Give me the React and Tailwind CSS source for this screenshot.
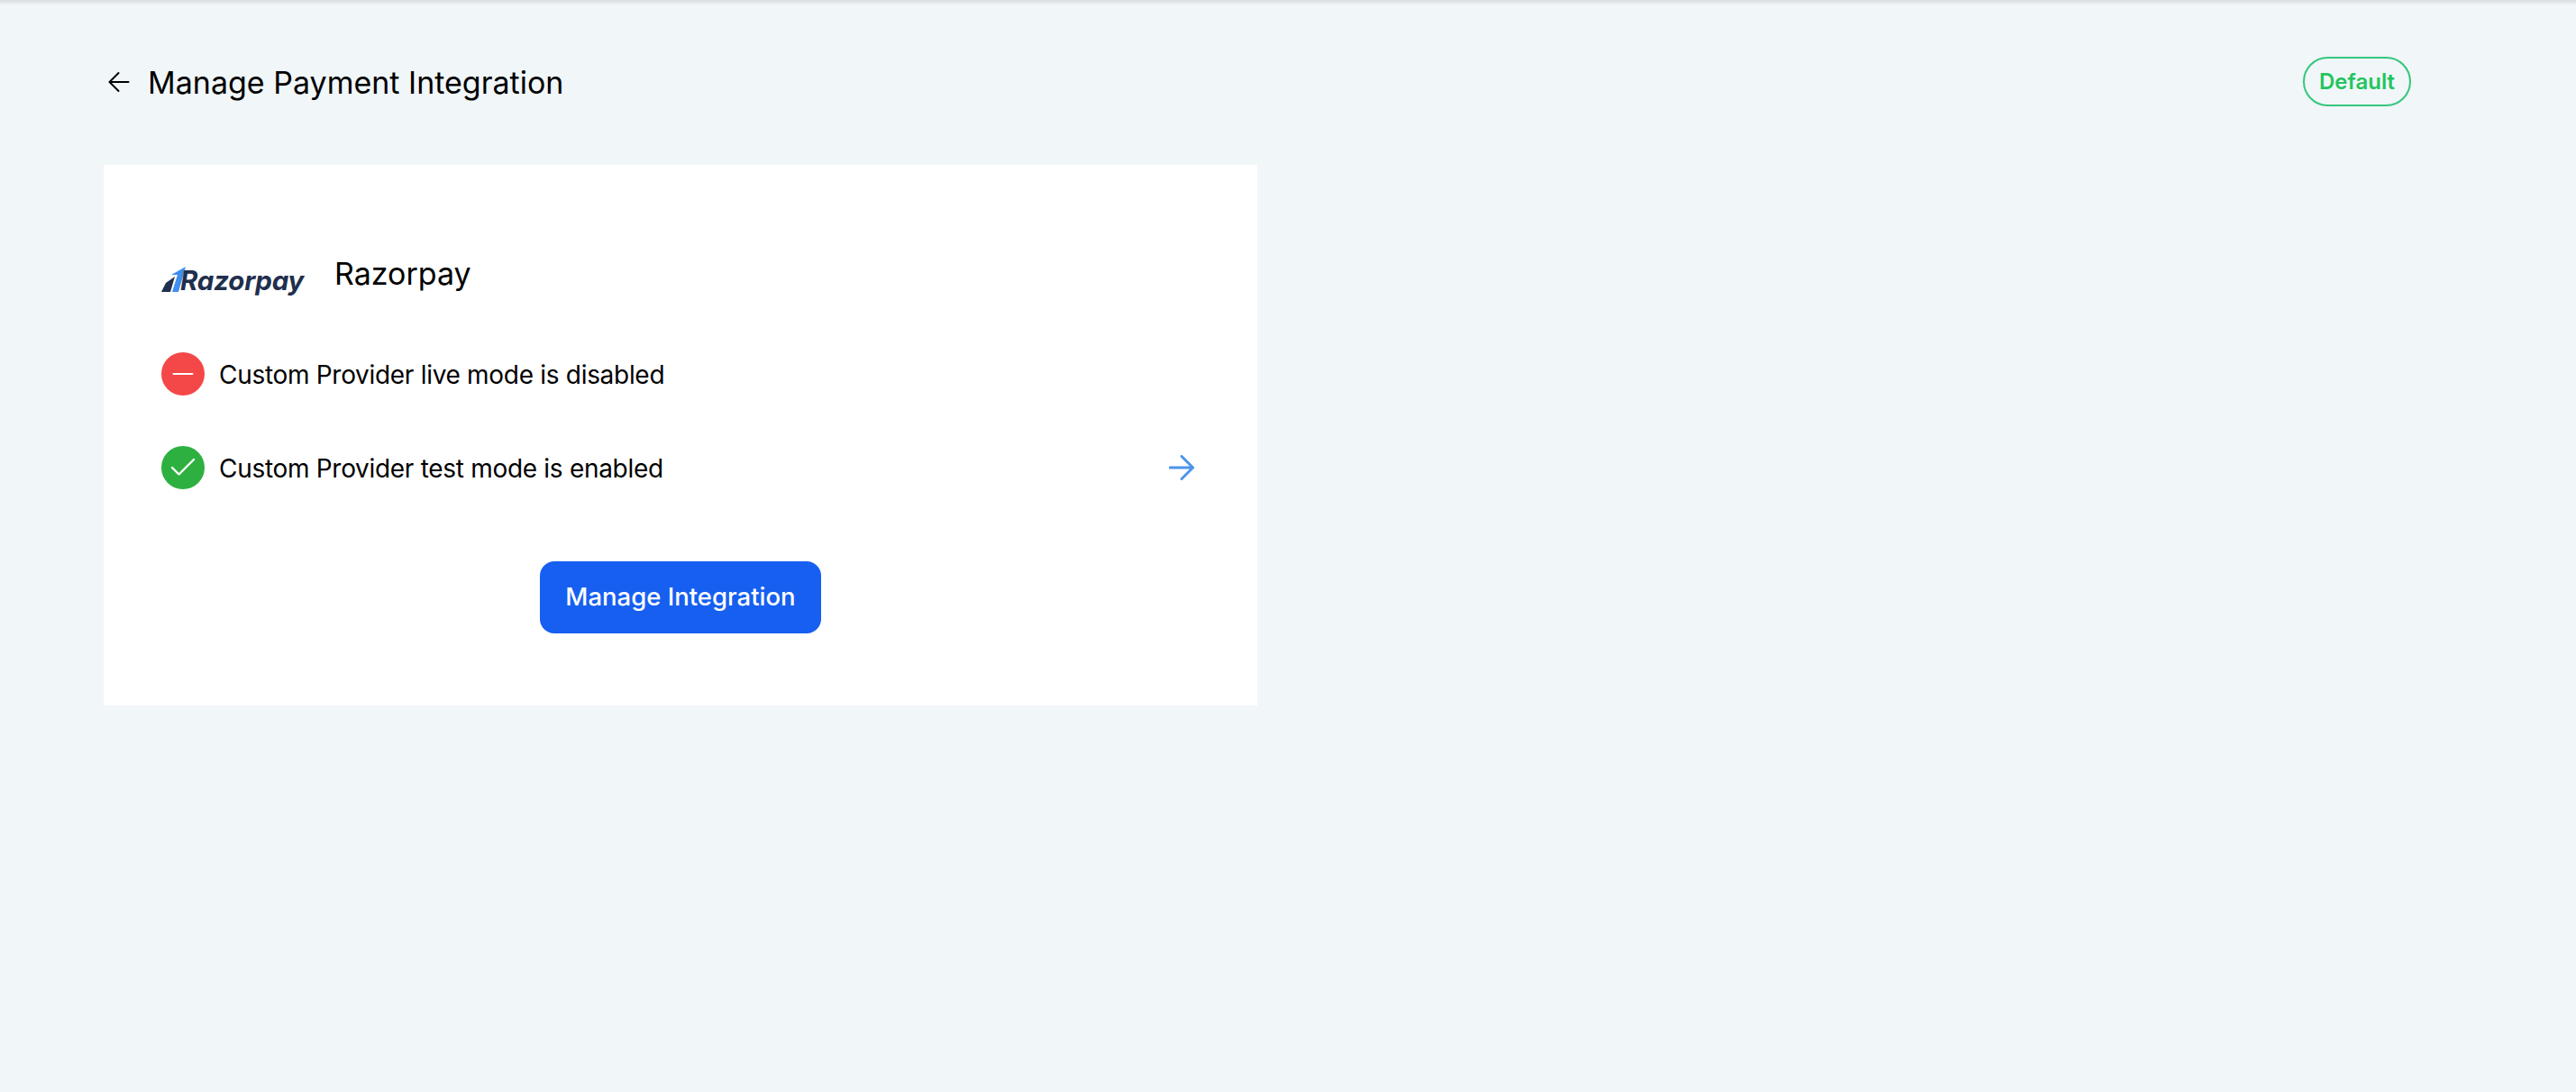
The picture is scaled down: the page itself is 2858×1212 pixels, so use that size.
import { Check, Minus } from 'lucide-react'

function ArrowLeftIcon() {
  return (
    <svg width="24" height="24" viewBox="0 0 24 24" fill="none" stroke="#000" strokeWidth="2" strokeLinecap="round" strokeLinejoin="round">
      <path d="M22.5 12H2M11.5 2L1.5 12l10 10" />
    </svg>
  )
}

function ArrowRightIcon() {
  return (
    <svg width="28" height="28" viewBox="0 0 28 28" fill="none" stroke="#4c94ec" strokeWidth="3" strokeLinecap="round" strokeLinejoin="round">
      <path d="M1 14h25M14 1.5L26.5 14 14 26.5" />
    </svg>
  )
}

function RazorpayLogo() {
  return (
    <div className="flex items-end w-[159px] h-[36px] mt-[14px]">
      <svg width="27" height="30" viewBox="0 0 27 30" className="shrink-0 mb-[3px]">
        <path d="M0 28L5 18 15 11 10 28Z" fill="#1f2f4d" />
        <path d="M11 9L27 0 19 28H12L18 9Z" fill="#3f8ff0" />
      </svg>
      <span className="ml-[-6px] font-['Inter',sans-serif] italic font-bold text-[29.5px] leading-[36px] tracking-[-0.2px] text-[#1f2f4d]">Razorpay</span>
    </div>
  )
}

function StatusRow({ icon, color, text, children }) {
  return (
    <div className="flex items-center h-[48px]">
      <div className={`flex items-center justify-center w-[48px] h-[48px] rounded-full ${color}`}>{icon}</div>
      <span className="ml-[16px] pt-[2px] text-[28px] tracking-[-0.3px] leading-[48px] text-black">{text}</span>
      {children}
    </div>
  )
}

export default function App() {
  return (
    <div className="min-h-screen bg-[#f1f6f9] font-['Inter',sans-serif]">
      <div className="h-[5px] bg-gradient-to-b from-[#d9dde1] to-[#eef2f5]" />
      <div className="pl-[115px] pr-[183px]">
        <div className="flex items-center justify-between h-[55px] mt-[58px]">
          <div className="flex items-center">
            <div className="ml-[5px] w-[24px] h-[24px]">
              <ArrowLeftIcon />
            </div>
            <h1 className="ml-[20px] pt-[2px] text-[34px] leading-[48px] font-normal text-black">Manage Payment Integration</h1>
          </div>
          <div className="flex items-center justify-center w-[120px] h-[55px] rounded-full border-2 border-[#34c77b] text-[24px] font-semibold text-[#22c55e]">
            Default
          </div>
        </div>

        <div className="mt-[65px] w-[1280px] h-[600px] bg-white pt-[97px] pl-[64px] pr-[70px]">
          <div className="flex items-center h-[48px]">
            <RazorpayLogo />
            <span className="ml-[33px] text-[34px] leading-[48px] text-black">Razorpay</span>
          </div>
          <div className="mt-[63px]">
            <StatusRow
              color="bg-[#f44748]"
              icon={<Minus size={36} color="#fff" strokeWidth={1.4} />}
              text="Custom Provider live mode is disabled"
            />
          </div>
          <div className="mt-[56px]">
            <StatusRow
              color="bg-[#2db03f]"
              icon={<Check size={36} color="#fff" strokeWidth={1.6} />}
              text="Custom Provider test mode is enabled"
            >
              <div className="ml-auto">
                <ArrowRightIcon />
              </div>
            </StatusRow>
          </div>
          <div className="flex justify-center mt-[80px] pl-[6px]">
            <button className="w-[312px] h-[80px] rounded-[16px] bg-[#175ff0] text-white text-[27.5px] font-medium">
              Manage Integration
            </button>
          </div>
        </div>
      </div>
    </div>
  )
}
